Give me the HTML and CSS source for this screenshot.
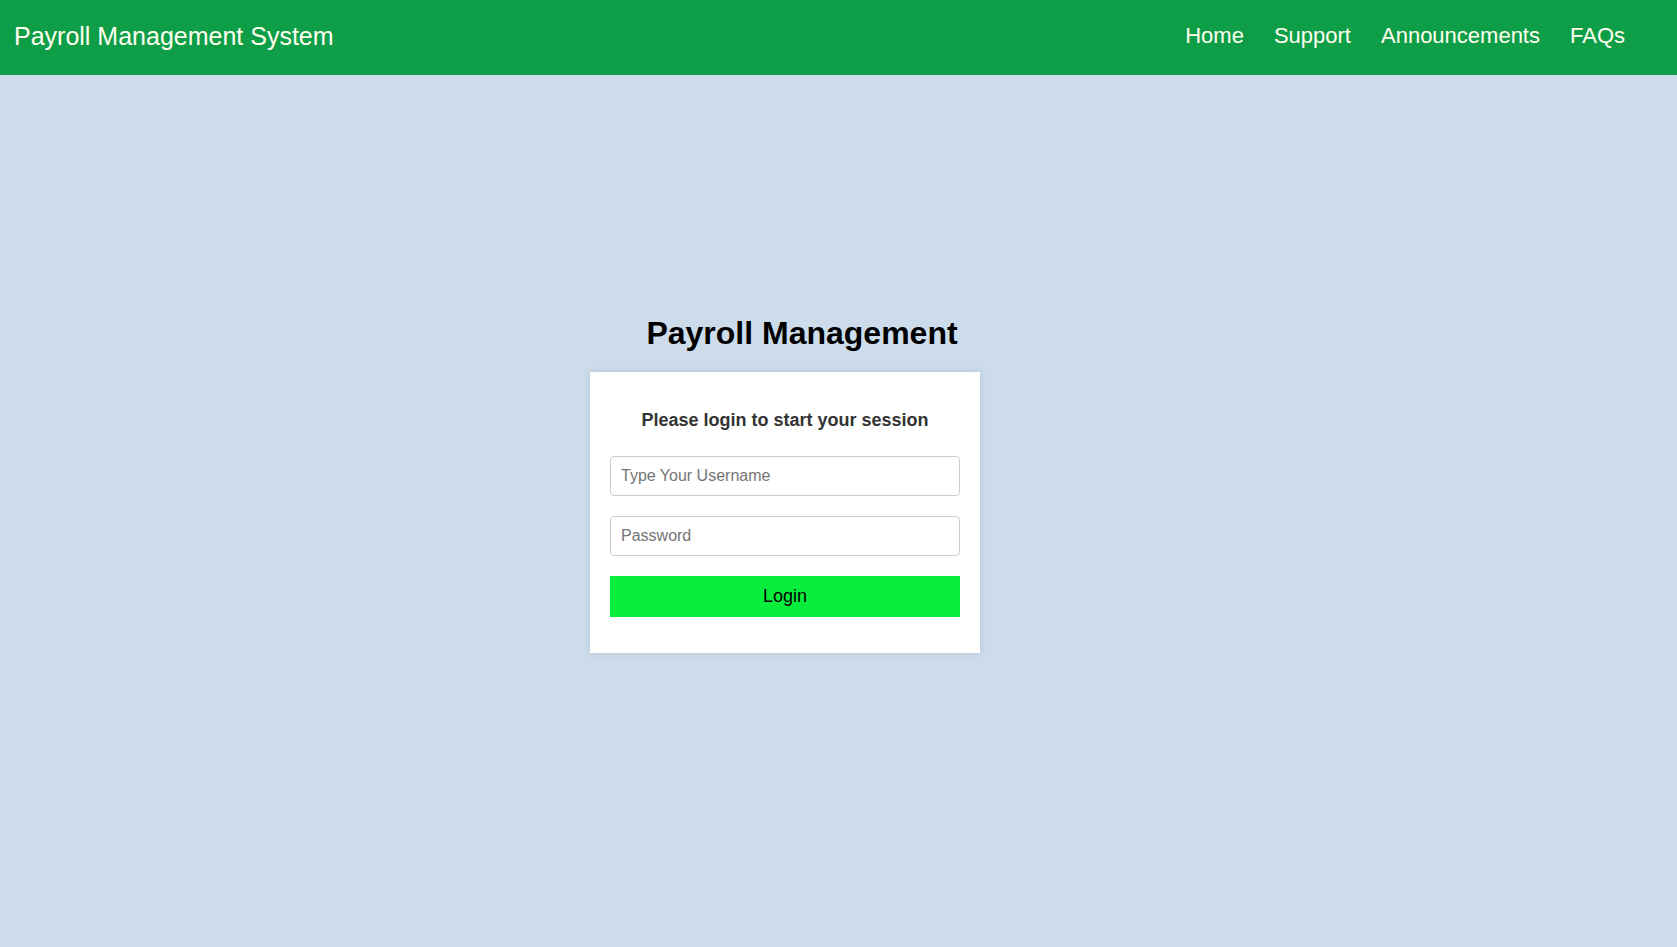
FILE: index.html
```html
<!DOCTYPE html>
<html lang="en">
<head>
<meta charset="utf-8">
<title>Payroll Management System</title>
<link rel="stylesheet" href="styles.css">
</head>
<body>
<header class="navbar">
  <a class="brand" href="#">Payroll Management System</a>
  <nav class="nav-links">
    <a href="#">Home</a>
    <a href="#">Support</a>
    <a href="#">Announcements</a>
    <a href="#">FAQs</a>
  </nav>
</header>
<main class="main">
  <div class="login-wrap">
    <h1 class="page-title">Payroll Management</h1>
    <form class="login-card">
      <p class="login-msg">Please login to start your session</p>
      <input class="field" type="text" placeholder="Type Your Username">
      <input class="field" type="password" placeholder="Password">
      <button class="login-btn" type="button">Login</button>
    </form>
  </div>
</main>
</body>
</html>
```

FILE: styles.css
```css
* { box-sizing: border-box; }
html, body {
  margin: 0;
  padding: 0;
}
body {
  font-family: "Liberation Sans", Arial, sans-serif;
  background: #cddcea;
  min-height: 947px;
}
.navbar {
  height: 75px;
  background: #0f9e48;
  display: flex;
  align-items: center;
  justify-content: space-between;
  padding: 0 52px 3px 14px;
}
.brand {
  color: #fffff0;
  text-decoration: none;
  font-size: 25px;
  line-height: 30px;
}
.nav-links {
  display: flex;
  gap: 30px;
}
.nav-links a {
  color: #fffff0;
  text-decoration: none;
  font-size: 22px;
  line-height: 26px;
}
.main {
  padding-top: 240px;
}
.login-wrap {
  width: 424px;
  margin-left: 590px;
  display: flex;
  flex-direction: column;
  align-items: flex-start;
}
.page-title {
  align-self: stretch;
  text-align: center;
  margin: 0 0 20px;
  font-size: 32px;
  line-height: 37px;
  font-weight: bold;
  color: #000;
}
.login-card {
  width: 390px;
  background: #fff;
  padding: 20px 20px 36px;
  box-shadow: 0 0 6px rgba(90, 110, 140, 0.25);
  display: flex;
  flex-direction: column;
}
.login-msg {
  margin: 18px 0 25px;
  text-align: center;
  font-size: 18px;
  line-height: 21px;
  font-weight: bold;
  color: #333;
}
.field {
  height: 40px;
  border: 1px solid #ccc;
  border-radius: 4px;
  padding: 0 10px;
  font-family: "Liberation Sans", Arial, sans-serif;
  font-size: 16px;
  margin-bottom: 20px;
  color: #333;
  background: #fff;
}
.field::placeholder { color: #757575; }
.login-btn {
  height: 41px;
  border: none;
  background: #08ee3c;
  color: #000;
  font-family: "Liberation Sans", Arial, sans-serif;
  font-size: 18px;
  cursor: pointer;
}
```
